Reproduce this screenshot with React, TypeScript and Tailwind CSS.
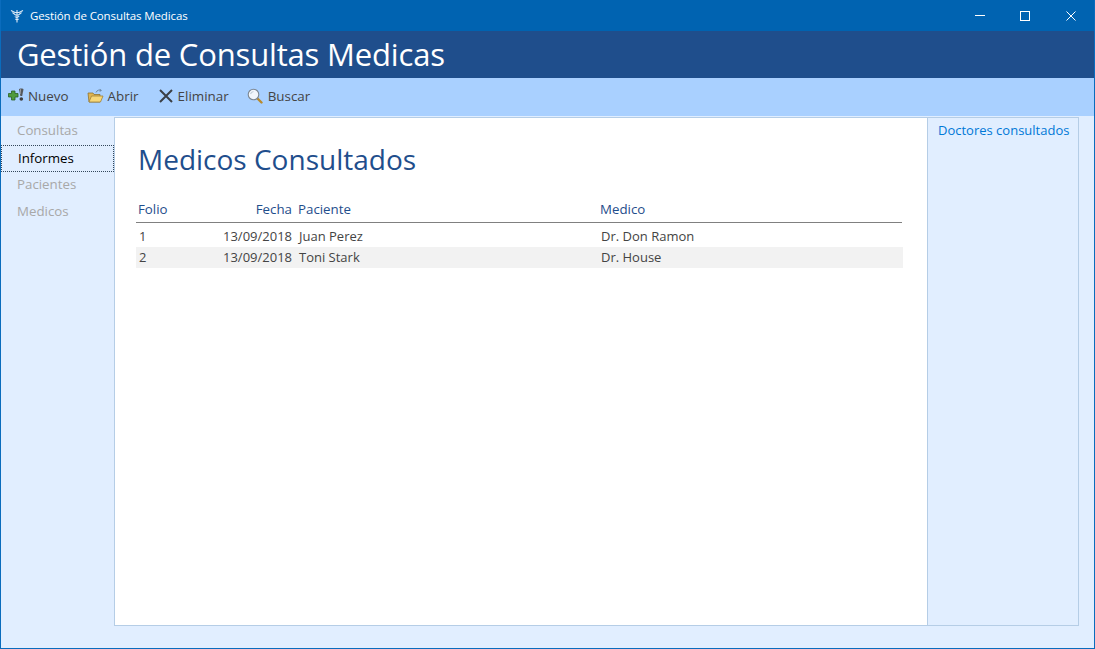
const FONT = "font-['Open_Sans','Noto_Sans',sans-serif]";

const NAV = [
  { label: "Consultas", cls: "h-[28px] pb-px pl-[16px] text-[#a8a8a8]" },
  { label: "Informes", cls: "h-[27px] border border-dotted border-[#33475b] pl-[16px] text-black" },
  { label: "Pacientes", cls: "h-[26px] pl-[16px] text-[#a8a8a8]" },
  { label: "Medicos", cls: "h-[27px] pl-[16px] text-[#a8a8a8]" },
];

const ROWS = [
  { folio: "1", fecha: "13/09/2018", paciente: "Juan Perez", medico: "Dr. Don Ramon", shaded: false },
  { folio: "2", fecha: "13/09/2018", paciente: "Toni Stark", medico: "Dr. House", shaded: true },
];

function CaduceusIcon() {
  return (
    <svg width="14" height="14" viewBox="0 0 14 14" fill="none" stroke="#dbe9f6" strokeWidth="1.1">
      <path d="M1 1.5L5 3.5H9L13 1.5" />
      <path d="M2.5 3.5L5.5 6H8.5L11.5 3.5" />
      <path d="M7 1V13.5" />
      <path d="M4.8 7.5C6 8.8 8 8.3 9.2 7.2M5.4 10C6.4 10.8 7.6 10.8 8.6 10" />
    </svg>
  );
}

function NuevoIcon() {
  return (
    <svg width="17" height="15" viewBox="0 0 17 15">
      <path d="M3.5 3H7V5.5H10V9H7V12H3.5V9H0.5V5.5H3.5Z" fill="#4f9a3c" stroke="#2c5f24" strokeWidth="0.8" />
      <path d="M11 1.3C11 0.3 15.5 0.3 15.5 1.3L14.2 8H12.4Z" fill="#55585c" />
      <path d="M12.2 1.2H13V6H12.6Z" fill="#b9bdc2" />
      <circle cx="13.3" cy="11" r="1.8" fill="#3f3f3f" />
    </svg>
  );
}

function AbrirIcon() {
  return (
    <svg width="17" height="16" viewBox="0 0 17 16">
      <path d="M1 5H6L7 6.5H13V14H2Z" fill="#e0b550" stroke="#8f7430" strokeWidth="0.8" />
      <path d="M2 14L4.5 8H16L13.5 14Z" fill="#f7d778" stroke="#a08238" strokeWidth="0.8" />
      <path d="M9 4.5C10 2 12.5 1.5 14 2.5" fill="none" stroke="#6f8aa6" strokeWidth="1" />
      <path d="M12.8 0.8L15 2.6L12.6 4Z" fill="#6f8aa6" />
    </svg>
  );
}

function EliminarIcon() {
  return (
    <svg width="14" height="14" viewBox="0 0 14 14" fill="none" stroke="#3a3f45" strokeWidth="2">
      <path d="M1 1L13 13M13 1L1 13" />
    </svg>
  );
}

function BuscarIcon() {
  return (
    <svg width="16" height="16" viewBox="0 0 16 16">
      <path d="M10.5 10.5L14.5 14.5" stroke="#b98a2c" strokeWidth="2.4" strokeLinecap="round" />
      <circle cx="6.5" cy="6.5" r="5.3" fill="#f2f6fb" stroke="#7d8894" strokeWidth="1.1" />
      <path d="M3.5 6C4 4.5 5 3.7 6.5 3.5" fill="none" stroke="#c3cfdb" strokeWidth="1.2" />
    </svg>
  );
}

const TOOLS = [
  { label: "Nuevo", icon: <NuevoIcon />, cls: "ml-[7px] gap-[3px]" },
  { label: "Abrir", icon: <AbrirIcon />, cls: "ml-[18px] gap-[4px]" },
  { label: "Eliminar", icon: <EliminarIcon />, cls: "ml-[20px] gap-[5px]" },
  { label: "Buscar", icon: <BuscarIcon />, cls: "ml-[18px] gap-[5px]" },
];

export default function App() {
  return (
    <div className={`${FONT} flex h-[649px] w-[1095px] flex-col overflow-hidden border-x border-b border-[#0a6cbd] bg-[#e1eeff]`}>
      {/* barra de titulo */}
      <div className="-mx-px flex h-[31px] shrink-0 items-center bg-[#0063b1] pl-[10px] text-white">
        <CaduceusIcon />
        <span className="ml-[6px] text-[11.5px] tracking-[-0.1px]">Gestión de Consultas Medicas</span>
        <div className="ml-auto flex items-center pr-[19px]">
          <span className="h-px w-[10px] bg-white" />
          <span className="ml-[35px] h-[10px] w-[10px] border border-white" />
          <svg className="ml-[36px]" width="10" height="10" viewBox="0 0 10 10" stroke="white" fill="none">
            <path d="M0.5 0.5L9.5 9.5M9.5 0.5L0.5 9.5" />
          </svg>
        </div>
      </div>

      <div className="-mx-px flex h-[47px] shrink-0 items-center bg-[#1f4e8c] pl-[17px] text-[31px] tracking-[-0.17px] text-white">
        Gestión de Consultas Medicas
      </div>

      <div className="flex h-[38px] shrink-0 items-center bg-[#a9d0ff] pb-[2px] text-[13.4px] text-[#444444]">
        {TOOLS.map((tool) => (
          <div key={tool.label} className={`flex items-center ${tool.cls}`}>
            {tool.icon}
            <span>{tool.label}</span>
          </div>
        ))}
      </div>

      <div className="flex min-h-0 flex-1 pb-[22px] pr-[15px] pt-px">
        <nav className="w-[113px] shrink-0 text-[13.3px]">
          {NAV.map((item) => (
            <div key={item.label} className={`flex items-center ${item.cls}`}>
              {item.label}
            </div>
          ))}
        </nav>

        <div className="flex min-w-0 flex-1 border border-[#b5cde6]">
          <main className="flex-1 bg-white pl-[21px] pr-[25px] pt-[21px]">
            <h1 className="pl-[2px] text-[28px] leading-[40px] text-[#1f4e8c]">Medicos Consultados</h1>
            <div className="mt-[21px] flex h-[23px] items-center border-b border-[#808080] pb-[2px] text-[13.3px] text-[#1f4e8c]">
              <span className="w-[73px] pl-[2px]">Folio</span>
              <span className="w-[83px] text-right">Fecha</span>
              <span className="w-[308px] pl-[6px]">Paciente</span>
              <span>Medico</span>
            </div>
            <div className="-mr-px mt-[3px] text-[13px] text-[#444444]">
              {ROWS.map((row) => (
                <div key={row.folio} className={`flex h-[21px] items-center ${row.shaded ? "bg-[#f2f2f2]" : ""}`}>
                  <span className="w-[74px] pl-[3px]">{row.folio}</span>
                  <span className="w-[82px] text-right">{row.fecha}</span>
                  <span className="w-[309px] pl-[7px]">{row.paciente}</span>
                  <span>{row.medico}</span>
                </div>
              ))}
            </div>
          </main>
          <aside className="w-[151px] shrink-0 border-l border-[#b5cde6] pl-[10px] pt-[3px] text-[13px] text-[#0078d7]">
            Doctores consultados
          </aside>
        </div>
      </div>
    </div>
  );
}
